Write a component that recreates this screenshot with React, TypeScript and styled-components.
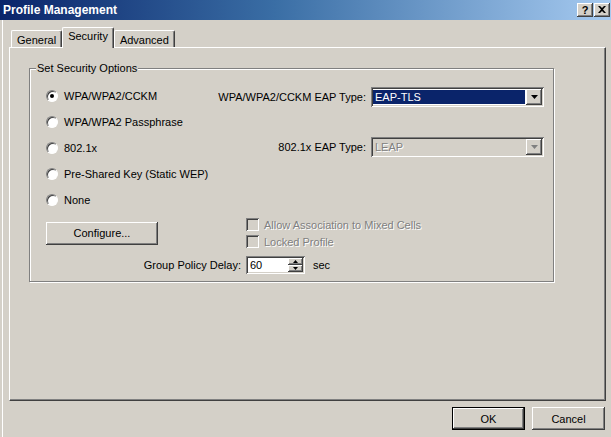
import styled, { createGlobalStyle } from 'styled-components';

const GlobalStyle = createGlobalStyle`
  html, body {
    margin: 0;
    padding: 0;
    background: #d4d0c8;
  }
  body {
    font-family: 'Liberation Sans', Arial, sans-serif;
    font-size: 11px;
    color: #000;
  }
  * {
    box-sizing: border-box;
  }
`;

// classic 3d edges
const raised = `
  box-shadow: inset -1px -1px 0 #404040, inset 1px 1px 0 #ffffff,
    inset -2px -2px 0 #808080, inset 2px 2px 0 #d4d0c8;
`;
const sunken = `
  box-shadow: inset 1px 1px 0 #808080, inset -1px -1px 0 #ffffff,
    inset 2px 2px 0 #404040, inset -2px -2px 0 #d4d0c8;
`;

const Window = styled.div`
  width: 611px;
  height: 437px;
  display: flex;
  flex-direction: column;
  background: #d4d0c8;
  overflow: hidden;
  box-shadow: inset 2px 0 0 #d4d0c8, inset 3px 0 0 #ffffff;
`;

const TitleBar = styled.div`
  height: 20px;
  flex: none;
  display: flex;
  align-items: center;
  justify-content: space-between;
  padding: 0 1px 1px 3px;
  background: linear-gradient(to right, #0a246a 0%, #3a6ea5 45%, #a6caf0 100%);
`;

const TitleText = styled.span`
  color: #fff;
  font-weight: bold;
  font-size: 12px;
`;

const TitleButtons = styled.div`
  display: flex;
  gap: 1px;
`;

const TitleButton = styled.div`
  width: 16px;
  height: 14px;
  display: flex;
  align-items: center;
  justify-content: center;
  background: #d4d0c8;
  font-weight: bold;
  font-size: 11px;
  ${raised}
`;

const Body = styled.div`
  flex: 1;
  display: flex;
  flex-direction: column;
  padding: 7px 5px 0 9px;
`;

const TabStrip = styled.div`
  display: flex;
  align-items: flex-end;
  height: 21px;
  padding-left: 2px;
  margin-bottom: -1px;
  position: relative;
  z-index: 1;
`;

const Tab = styled.div<{ $active?: boolean }>`
  height: ${({ $active }) => ($active ? '21px' : '17px')};
  margin-bottom: ${({ $active }) => ($active ? '0' : '1px')};
  padding: ${({ $active }) => ($active ? '1px 5px 0 5px' : '2px 5px 0 5px')};
  display: flex;
  align-items: ${({ $active }) => ($active ? 'flex-start' : 'center')};
  background: #d4d0c8;
  border-top: 1px solid #fff;
  border-left: 1px solid #fff;
  border-right: 1px solid #404040;
  border-radius: 2px 2px 0 0;
  box-shadow: inset -1px 0 0 #808080;
  line-height: 15px;
`;

const Panel = styled.div`
  height: 354px;
  flex: none;
  display: flex;
  flex-direction: column;
  border-top: 1px solid #fff;
  border-left: 1px solid #fff;
  border-right: 1px solid #404040;
  border-bottom: 1px solid #404040;
  box-shadow: inset -1px -1px 0 #808080;
`;

const GroupBox = styled.div`
  position: relative;
  width: 525px;
  margin: 20px 0 0 19px;
  padding: 14px 9px 7px 16px;
  border: 1px solid #808080;
  box-shadow: inset 1px 1px 0 #fff, 1px 1px 0 #fff;
`;

const Legend = styled.span`
  position: absolute;
  top: -7px;
  left: 6px;
  padding: 0 1px;
  line-height: 13px;
  background: #d4d0c8;
`;

const TopArea = styled.div`
  display: grid;
  grid-template-columns: 160px 1fr;
`;

const RadioList = styled.div`
  display: flex;
  flex-direction: column;
`;

const RadioRow = styled.label`
  height: 26px;
  display: flex;
  align-items: center;
  gap: 6px;
  white-space: nowrap;
`;

const RadioCircle = styled.span<{ $checked?: boolean }>`
  position: relative;
  flex: none;
  width: 12px;
  height: 12px;
  border-radius: 50%;
  background: #fff;
  border: 1px solid;
  border-color: #808080 #ffffff #ffffff #808080;
  box-shadow: inset 1px 1px 0 #404040;

  &::after {
    content: '';
    display: ${({ $checked }) => ($checked ? 'block' : 'none')};
    position: absolute;
    left: 3px;
    top: 3px;
    width: 4px;
    height: 4px;
    border-radius: 50%;
    background: #000;
  }
`;

const EapFields = styled.div`
  display: grid;
  grid-template-columns: 1fr 173px;
  column-gap: 5px;
  row-gap: 30px;
  align-items: center;
  align-content: start;
  padding-top: 4px;
`;

const FieldLabel = styled.span`
  text-align: right;
  white-space: nowrap;
`;

const Select = styled.div<{ $disabled?: boolean }>`
  height: 20px;
  display: flex;
  padding: 2px;
  background: ${({ $disabled }) => ($disabled ? '#d4d0c8' : '#fff')};
  ${sunken}
`;

const SelectValue = styled.div<{ $selected?: boolean; $disabled?: boolean }>`
  flex: 1;
  display: flex;
  align-items: center;
  padding-left: 2px;
  margin: 1px 1px 1px 0;
  background: ${({ $selected }) => ($selected ? '#0a246a' : 'transparent')};
  color: ${({ $selected, $disabled }) =>
    $selected ? '#fff' : $disabled ? '#808080' : '#000'};
  text-shadow: ${({ $disabled }) => ($disabled ? '1px 1px 0 #fff' : 'none')};
`;

const ArrowButton = styled.div`
  width: 16px;
  display: flex;
  align-items: center;
  justify-content: center;
  background: #d4d0c8;
  ${raised}
`;

const BottomArea = styled.div`
  display: grid;
  grid-template-columns: 195px 1fr;
  column-gap: 5px;
  row-gap: 6px;
  align-items: center;
  margin-top: 3px;
`;

const PushButton = styled.button<{ $default?: boolean; $width: number }>`
  width: ${({ $width }) => $width}px;
  height: 23px;
  padding: 0;
  font: inherit;
  color: #000;
  background: #d4d0c8;
  border: ${({ $default }) => ($default ? '1px solid #000' : 'none')};
  ${raised}
`;

const CheckList = styled.div`
  display: flex;
  flex-direction: column;
`;

const CheckRow = styled.label`
  height: 17px;
  display: flex;
  align-items: center;
  gap: 5px;
  color: #808080;
  text-shadow: 1px 1px 0 #fff;
  white-space: nowrap;
`;

const CheckBox = styled.span`
  flex: none;
  width: 13px;
  height: 13px;
  background: #d4d0c8;
  ${sunken}
`;

const DelayLabel = styled.span`
  text-align: right;
`;

const DelayControls = styled.div`
  display: flex;
  align-items: center;
  gap: 8px;
`;

const SpinField = styled.div`
  width: 59px;
  height: 18px;
  display: flex;
  padding: 2px;
  background: #fff;
  ${sunken}
`;

const SpinValue = styled.span`
  flex: 1;
  padding-left: 2px;
  line-height: 14px;
`;

const SpinButtons = styled.div`
  width: 15px;
  display: flex;
  flex-direction: column;
`;

const SpinButton = styled.div`
  flex: 1;
  display: flex;
  align-items: center;
  justify-content: center;
  background: #d4d0c8;
  ${raised}
`;

const Footer = styled.div`
  display: flex;
  justify-content: flex-end;
  gap: 7px;
  padding: 6px 1px 0 0;
`;

const Arrow = ({ color = '#000', up = false, size = 7 }: { color?: string; up?: boolean; size?: number }) => {
  const h = Math.ceil(size / 2);
  return (
    <svg width={size} height={h} viewBox={`0 0 ${size} ${h}`}>
      <polygon
        points={up ? `0,${h} ${size},${h} ${size / 2},0` : `0,0 ${size},0 ${size / 2},${h}`}
        fill={color}
      />
    </svg>
  );
};

const radios = [
  'WPA/WPA2/CCKM',
  'WPA/WPA2 Passphrase',
  '802.1x',
  'Pre-Shared Key (Static WEP)',
  'None',
];

export default function App() {
  return (
    <>
      <GlobalStyle />
      <Window>
        <TitleBar>
          <TitleText>Profile Management</TitleText>
          <TitleButtons>
            <TitleButton>?</TitleButton>
            <TitleButton>
              <svg width="8" height="7" viewBox="0 0 8 7">
                <path d="M0 0h2l2 2 2-2h2L5 3.5 8 7H6L4 5 2 7H0l3-3.5z" fill="#000" />
              </svg>
            </TitleButton>
          </TitleButtons>
        </TitleBar>
        <Body>
          <TabStrip>
            <Tab>General</Tab>
            <Tab $active>Security</Tab>
            <Tab>Advanced</Tab>
          </TabStrip>
          <Panel>
            <GroupBox>
              <Legend>Set Security Options</Legend>
              <TopArea>
                <RadioList>
                  {radios.map((r, i) => (
                    <RadioRow key={r}>
                      <RadioCircle $checked={i === 0} />
                      {r}
                    </RadioRow>
                  ))}
                </RadioList>
                <EapFields>
                  <FieldLabel>WPA/WPA2/CCKM EAP Type:</FieldLabel>
                  <Select>
                    <SelectValue $selected>EAP-TLS</SelectValue>
                    <ArrowButton>
                      <Arrow />
                    </ArrowButton>
                  </Select>
                  <FieldLabel>802.1x EAP Type:</FieldLabel>
                  <Select $disabled>
                    <SelectValue $disabled>LEAP</SelectValue>
                    <ArrowButton>
                      <Arrow color="#808080" />
                    </ArrowButton>
                  </Select>
                </EapFields>
              </TopArea>
              <BottomArea>
                <PushButton $width={112}>Configure...</PushButton>
                <CheckList>
                  <CheckRow>
                    <CheckBox />
                    Allow Association to Mixed Cells
                  </CheckRow>
                  <CheckRow>
                    <CheckBox />
                    Locked Profile
                  </CheckRow>
                </CheckList>
                <DelayLabel>Group Policy Delay:</DelayLabel>
                <DelayControls>
                  <SpinField>
                    <SpinValue>60</SpinValue>
                    <SpinButtons>
                      <SpinButton>
                        <Arrow up size={5} />
                      </SpinButton>
                      <SpinButton>
                        <Arrow size={5} />
                      </SpinButton>
                    </SpinButtons>
                  </SpinField>
                  sec
                </DelayControls>
              </BottomArea>
            </GroupBox>
          </Panel>
          <Footer>
            <PushButton $default $width={73}>OK</PushButton>
            <PushButton $width={73}>Cancel</PushButton>
          </Footer>
        </Body>
      </Window>
    </>
  );
}
